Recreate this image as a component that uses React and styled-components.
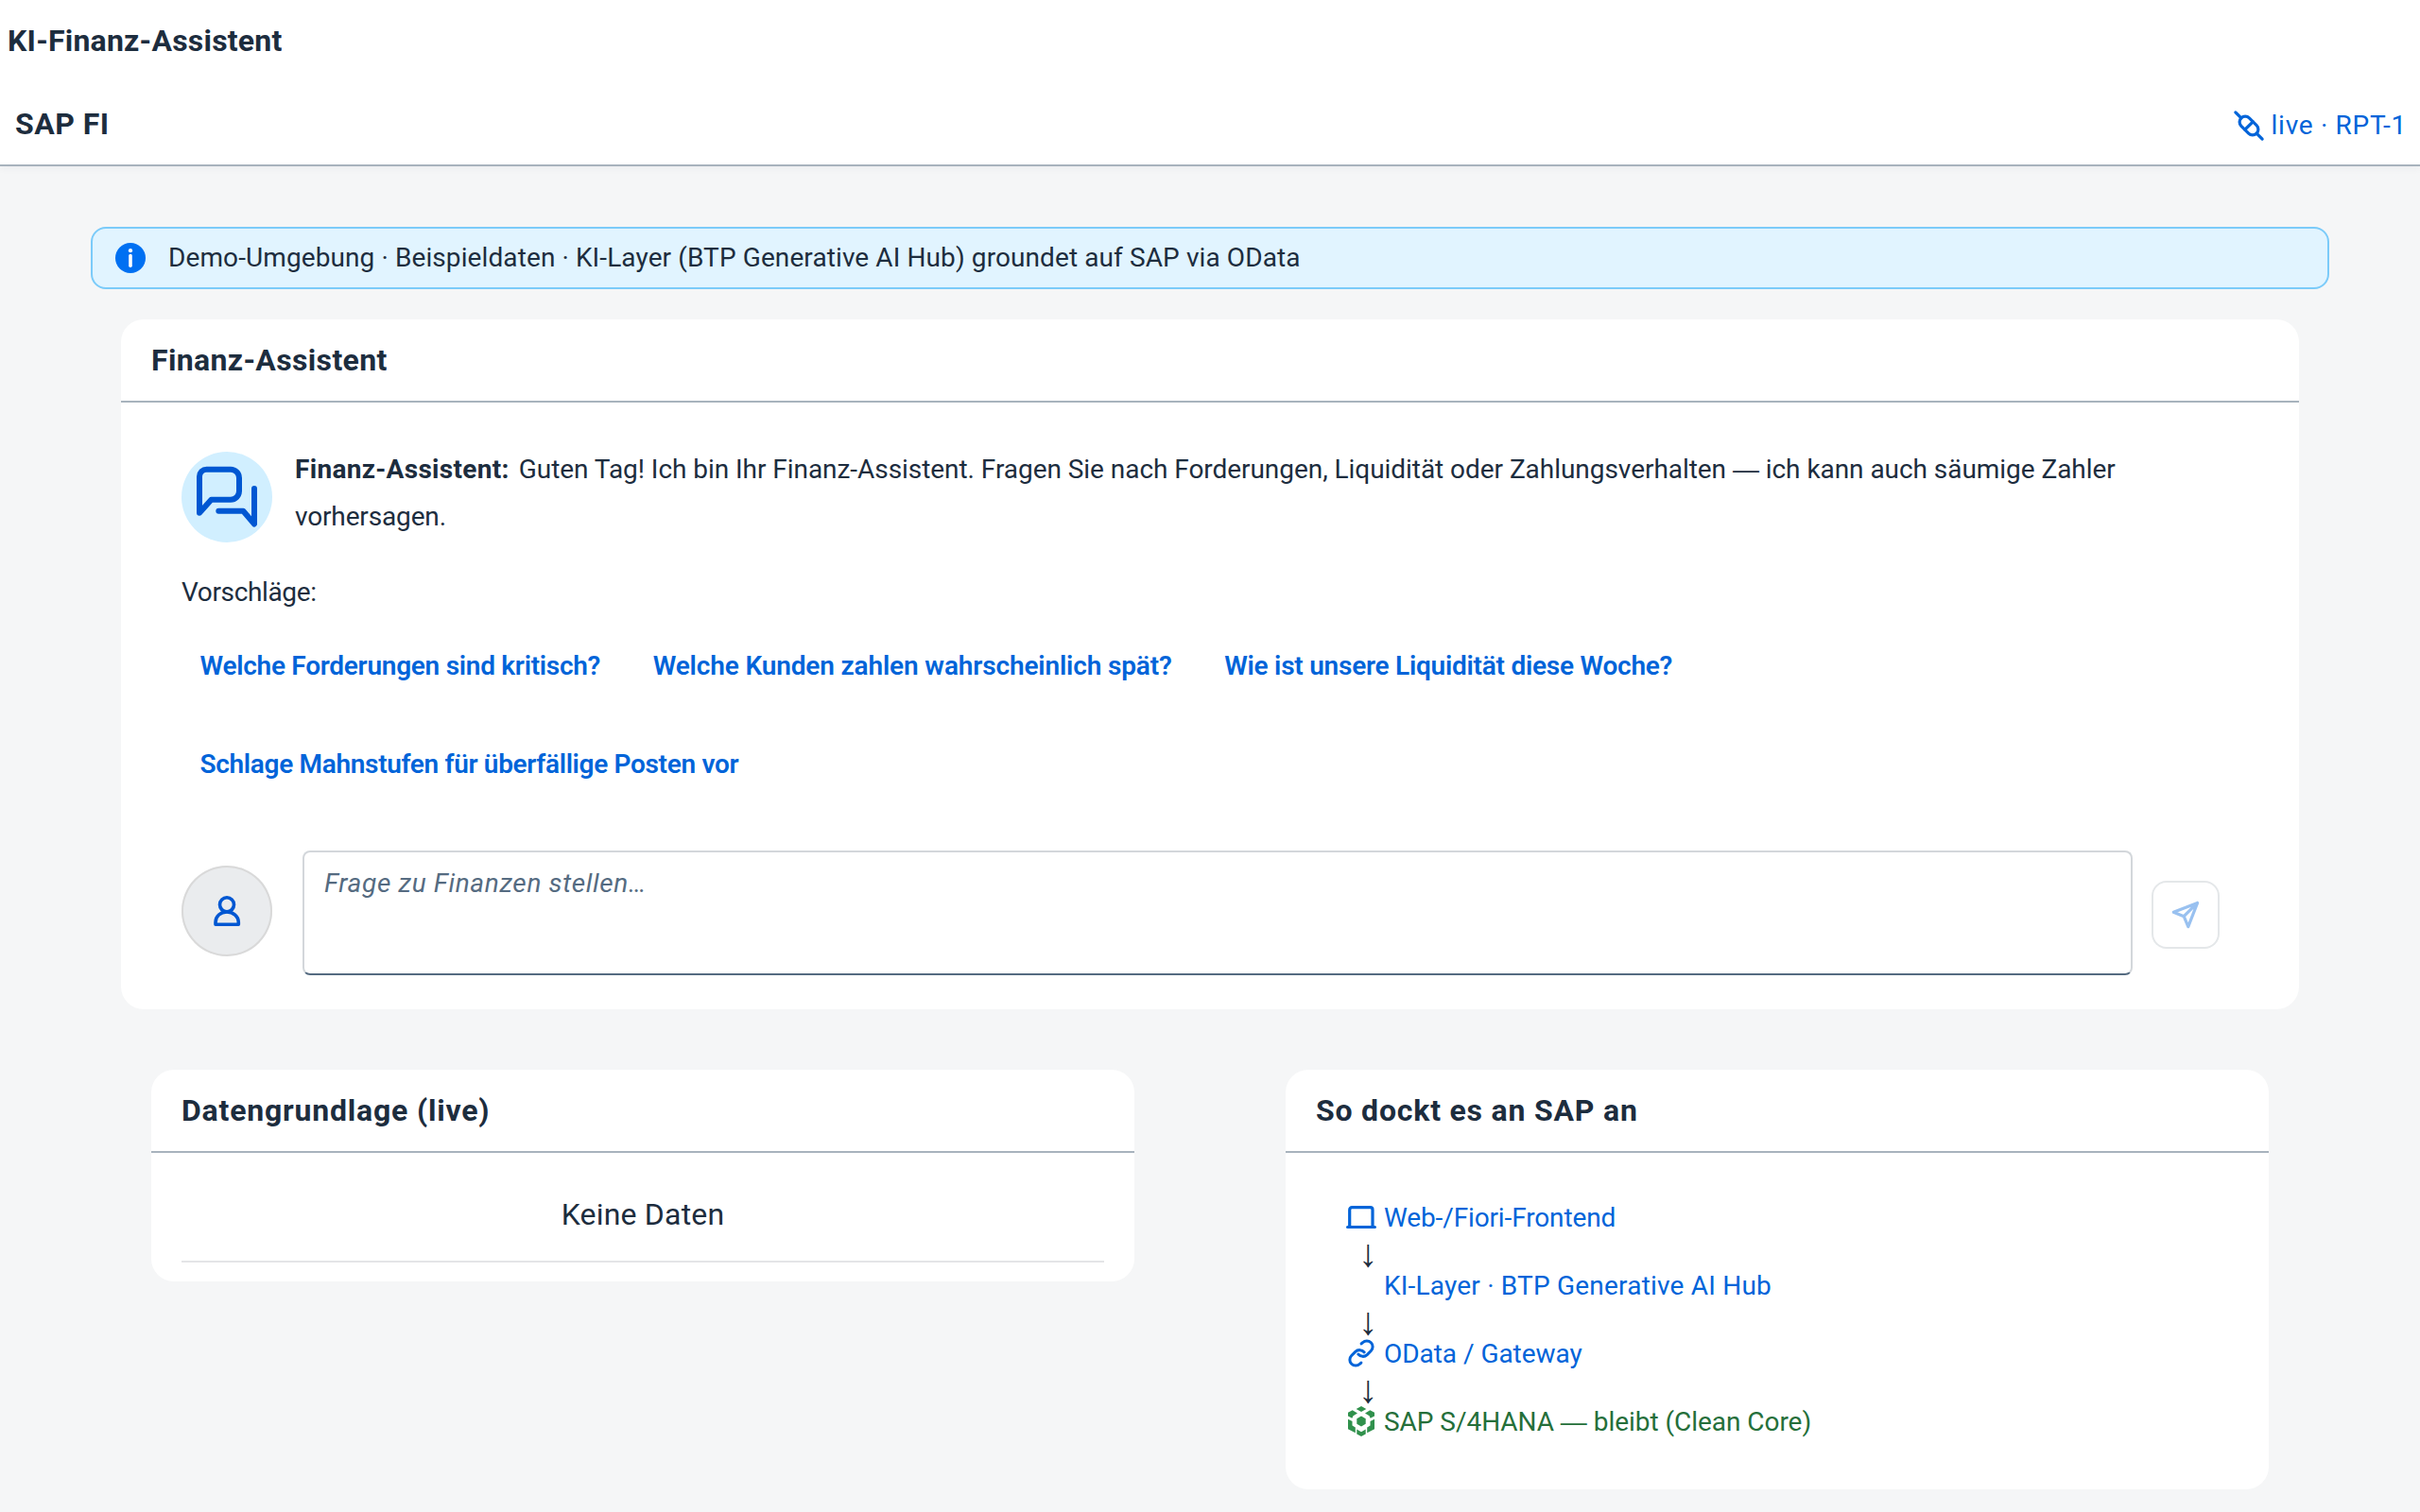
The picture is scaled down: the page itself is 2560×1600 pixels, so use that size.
import React from "react";
import styled, { createGlobalStyle } from "styled-components";

const suggestions = [
  { text: "Welche Forderungen sind kritisch?", spacing: -0.27 },
  { text: "Welche Kunden zahlen wahrscheinlich spät?", spacing: -0.14 },
  { text: "Wie ist unsere Liquidität diese Woche?", spacing: -0.24 },
  { text: "Schlage Mahnstufen für überfällige Posten vor", spacing: -0.32 },
];

const InfoIcon = () => (
  <Icon viewBox="0 0 32 32">
    <circle cx="16" cy="16" r="16" fill="#0070f2" />
    <circle cx="16" cy="8.2" r="2.1" fill="#fff" />
    <path d="M16 13.6v10.6" stroke="#fff" strokeWidth="3.6" strokeLinecap="round" />
  </Icon>
);

const ConnectedIcon = () => (
  <Icon viewBox="0 0 32 32">
    <g
      transform="rotate(45 16 16)"
      fill="none"
      stroke="currentColor"
      strokeWidth="3.2"
      strokeLinecap="round"
    >
      <rect x="4.5" y="10" width="23" height="12" rx="6" />
      <path d="M16 10v12M-4 16h8.5M27.5 16H36" />
    </g>
  </Icon>
);

const DiscussionIcon = () => (
  <AvatarIcon viewBox="0 0 96 96">
    <path d="M31.5 50.7H52a9 9 0 0 0 9-9v-14a9 9 0 0 0-9-9H26.5a7.5 7.5 0 0 0-7.5 7.5v38.5z" />
    <path d="M39.3 62.7h26L77 76.5V39" />
  </AvatarIcon>
);

const PersonIcon = () => (
  <AvatarIcon viewBox="0 0 96 96" $stroke={3.6}>
    <circle cx="48" cy="41.3" r="7.5" />
    <path d="M36 62.3V60c0-6.6 5.4-11 12-11s12.3 4.4 12.3 11v2.3z" />
  </AvatarIcon>
);

const SendIcon = () => (
  <AvatarIcon viewBox="0 0 72 72" $stroke={3.2} $color="#99c1f0">
    <path d="M48.6 23.4 23.3 33.3l10.9 4.4 4.6 11zM48.6 23.4 34.2 37.7" />
  </AvatarIcon>
);

const LaptopIcon = () => (
  <Icon viewBox="0 0 32 32" fill="none" stroke="currentColor" strokeWidth="3.2">
    <path d="M3.7 26V8.2a2.5 2.5 0 0 1 2.5-2.5h19.3A2.5 2.5 0 0 1 28 8.2V26" />
    <path d="M1.6 26.5h28.8" strokeLinecap="round" />
  </Icon>
);

const ChainIcon = () => (
  <Icon viewBox="0 0 32 32" fill="none" stroke="currentColor" strokeWidth="3" strokeLinecap="round">
    <path d="M12.8 17.1a6.5 6.5 0 0 0 9.4.5l4.1-4.1a6.2 6.2 0 0 0-8.8-8.8l-1.4 1.2" />
    <path d="M19.2 14.9a6.5 6.5 0 0 0-9.4-.5l-4.1 4.1a6.2 6.2 0 0 0 8.8 8.8l1.4-1.2" />
  </Icon>
);

const ClusterIcon = () => (
  <Icon viewBox="0 0 32 32" fill="#30914c">
    <path d="M10.7 3 16 0l5.3 3L16 6z" />
    <path d="M2 6.7l4.7-2.4L12 7.5l-4.5 2.7-1.2 2.6L2 10.4z" />
    <path d="M30 6.7l-4.7-2.4L20 7.5l4.5 2.7 1.2 2.6 4.3-2.4z" />
    <path d="M16 10.6l4.7 2.7v5.4L16 21.4l-4.7-2.7v-5.4z" />
    <path d="M2 13.7 6.5 16v4.5l3.3 2v5.7L2 24.2z" />
    <path d="M30 13.7 25.5 16v4.5l-3.3 2v5.7l7.8-4z" />
    <path d="M11.3 24.5 16 27.2l4.7-2.7v5L16 32l-4.7-2.5z" />
  </Icon>
);

const BlankIcon = () => <Icon viewBox="0 0 32 32" />;

const App = () => {
  return (
    <Page>
      <GlobalStyle />
      <Header>
        <PageTitle>KI-Finanz-Assistent</PageTitle>
        <HeaderRow>
          <Title $spacing={0.5}>SAP FI</Title>
          <LiveStatus>
            <ConnectedIcon />
            <StatusText $spacing={0.7}>live · RPT-1</StatusText>
          </LiveStatus>
        </HeaderRow>
      </Header>

      <MessageStrip>
        <InfoIcon />
        <StatusText $spacing={0.1}>
          Demo-Umgebung · Beispieldaten · KI-Layer (BTP Generative AI Hub) groundet auf SAP via OData
        </StatusText>
      </MessageStrip>

      <ChatPanel>
        <PanelHeader>
          <Title $spacing={0.35}>Finanz-Assistent</Title>
        </PanelHeader>
        <ChatBody>
          <Message>
            <BotAvatar>
              <DiscussionIcon />
            </BotAvatar>
            <MessageText>
              <Sender>Finanz-Assistent:</Sender>
              Guten Tag! Ich bin Ihr Finanz-Assistent. Fragen Sie nach Forderungen, Liquidität oder
              Zahlungsverhalten <Dash>—</Dash> ich kann auch säumige Zahler{" "}
              <LastWord>vorhersagen.</LastWord>
            </MessageText>
          </Message>
          <SuggestionLabel>Vorschläge:</SuggestionLabel>
          <Suggestions>
            {suggestions.map((s) => (
              <SuggestionButton key={s.text} $spacing={s.spacing}>
                {s.text}
              </SuggestionButton>
            ))}
          </Suggestions>
          <FeedInput>
            <UserAvatar>
              <PersonIcon />
            </UserAvatar>
            <Question placeholder="Frage zu Finanzen stellen…" />
            <SendButton>
              <SendIcon />
            </SendButton>
          </FeedInput>
        </ChatBody>
      </ChatPanel>

      <PanelGrid>
        <Panel>
          <PanelHeader>
            <Title $spacing={0.8}>Datengrundlage (live)</Title>
          </PanelHeader>
          <EmptyList>Keine Daten</EmptyList>
        </Panel>
        <Panel>
          <PanelHeader>
            <Title $spacing={0.8}>So dockt es an SAP an</Title>
          </PanelHeader>
          <LayerList>
            <Layer>
              <LaptopIcon />
              <LayerText $spacing={-0.13}>Web-/Fiori-Frontend</LayerText>
            </Layer>
            <Arrow>↓</Arrow>
            <Layer>
              <BlankIcon />
              <LayerText $spacing={0.2}>KI-Layer · BTP Generative AI Hub</LayerText>
            </Layer>
            <Arrow>↓</Arrow>
            <Layer>
              <ChainIcon />
              <LayerText $spacing={-0.04}>OData / Gateway</LayerText>
            </Layer>
            <Arrow>↓</Arrow>
            <Layer $positive>
              <ClusterIcon />
              <LayerText $spacing={-0.04}>
                SAP S/4HANA <Dash>—</Dash> bleibt (Clean Core)
              </LayerText>
            </Layer>
          </LayerList>
        </Panel>
      </PanelGrid>
    </Page>
  );
};

export default App;

const GlobalStyle = createGlobalStyle`
  * {
    box-sizing: border-box;
  }

  body {
    margin: 0;
    background: #f5f6f7;
    color: #1d2d3e;
    font-family: Roboto, "Liberation Sans", sans-serif;
    font-size: 28px;
  }
`;

const Page = styled.div`
  display: flex;
  flex-direction: column;
  height: 1600px;
`;

const Icon = styled.svg`
  flex: none;
  width: 32px;
  height: 32px;
  overflow: visible;
`;

const AvatarIcon = styled.svg`
  display: block;
  width: 100%;
  height: 100%;
  fill: none;
  stroke: ${(props) => props.$color || "#0057d2"};
  stroke-width: ${(props) => props.$stroke || 6};
  stroke-linecap: round;
  stroke-linejoin: round;
`;

const Header = styled.header`
  height: 176px;
  background: #fff;
  border-bottom: 2px solid #a8b3bd;
  box-shadow: 0 2px 8px rgba(34, 53, 72, 0.05);
`;

const PageTitle = styled.h1`
  margin: 0;
  padding-left: 8px;
  font-size: 32px;
  font-weight: 700;
  line-height: 86px;
  letter-spacing: 0.22px;
`;

const HeaderRow = styled.div`
  display: flex;
  justify-content: space-between;
  align-items: center;
  padding: 0 14px 0 16px;
  height: 90px;
`;

const Title = styled.h2`
  margin: 0;
  font-size: 32px;
  font-weight: 700;
  line-height: 40px;
  letter-spacing: ${(props) => props.$spacing}px;
`;

const LiveStatus = styled.div`
  display: flex;
  align-items: center;
  gap: 8px;
  padding-top: 4px;
  color: #0064d9;
`;

const StatusText = styled.span`
  line-height: 36px;
  white-space: nowrap;
  letter-spacing: ${(props) => props.$spacing}px;
`;

const Dash = styled.span`
  font-family: "Liberation Sans", sans-serif;
  line-height: 1;
`;

const MessageStrip = styled.div`
  display: flex;
  flex: none;
  align-items: center;
  gap: 24px;
  height: 66px;
  margin: 64px 96px 0;
  padding: 0 24px;
  border: 2px solid #7bcbf9;
  border-radius: 16px;
  background: #e1f4ff;
`;

const Panel = styled.section`
  border-radius: 24px;
  background: #fff;
`;

const ChatPanel = styled(Panel)`
  flex: none;
  margin: 32px 128px 0;
`;

const PanelHeader = styled.div`
  display: flex;
  align-items: center;
  height: 88px;
  padding: 0 32px;
  border-bottom: 2px solid #a8b3bd;
`;

const ChatBody = styled.div`
  padding: 46px 64px 36px;
`;

const Message = styled.div`
  display: flex;
  gap: 24px;
`;

const Avatar = styled.div`
  flex: none;
  width: 96px;
  height: 96px;
  border-radius: 50%;
`;

const BotAvatar = styled(Avatar)`
  margin-top: 6px;
  background: #d1efff;
`;

const UserAvatar = styled(Avatar)`
  margin: 16px 32px 0 0;
  background: #eaecee;
  box-shadow: inset 0 0 0 2px #d9d9d9;
`;

const MessageText = styled.p`
  margin: 0;
  line-height: 50px;
  letter-spacing: -0.05px;
`;

const Sender = styled.strong`
  margin-right: 10px;
  letter-spacing: 0.31px;
`;

const LastWord = styled.span`
  letter-spacing: -0.15px;
`;

const SuggestionLabel = styled.div`
  margin-top: 33px;
  line-height: 40px;
  letter-spacing: -0.36px;
`;

const Suggestions = styled.div`
  display: flex;
  flex-wrap: wrap;
  gap: 32px 16px;
  margin-top: 21px;
`;

const SuggestionButton = styled.button`
  height: 72px;
  padding: 0 20px 0 19.5px;
  border: none;
  background: transparent;
  color: #0064d9;
  font: 600 28px Roboto, sans-serif;
  letter-spacing: ${(props) => props.$spacing}px;
`;

const FeedInput = styled.div`
  display: flex;
  align-items: flex-start;
  margin-top: 56px;
  padding-right: 20px;
`;

const Question = styled.textarea`
  flex: 1;
  height: 132px;
  padding: 13px 21px;
  border: 2px solid #d3d7db;
  border-bottom-color: #556b81;
  border-radius: 8px;
  background: #fff;
  resize: none;
  font: 28px/40px Roboto, sans-serif;

  &::placeholder {
    color: #556b81;
    font-style: italic;
    letter-spacing: 0.65px;
  }
`;

const SendButton = styled.button`
  flex: none;
  width: 72px;
  height: 72px;
  margin: 32px 0 0 20px;
  padding: 0;
  border: none;
  border-radius: 16px;
  background: #fff;
  box-shadow: inset 0 0 0 2px #e4e7e9;
`;

const PanelGrid = styled.div`
  display: grid;
  grid-template-columns: 1fr 1fr;
  align-items: start;
  gap: 160px;
  margin: 64px 160px 0;
`;

const EmptyList = styled.div`
  margin: 16px 32px 20px;
  border-bottom: 2px solid #e4e5e7;
  font-size: 32px;
  line-height: 98px;
  letter-spacing: 0.2px;
  text-align: center;
`;

const LayerList = styled.div`
  padding: 50px 64px 54px;
`;

const Layer = styled.div`
  display: flex;
  align-items: center;
  gap: 8px;
  height: 36px;
  color: ${(props) => (props.$positive ? "#256f3a" : "#0064d9")};
`;

const LayerText = styled(StatusText)`
  padding-top: 2px;
`;

const Arrow = styled.div`
  height: 36px;
  padding-left: 13px;
  font-family: "Liberation Sans", sans-serif;
  font-size: 41px;
  line-height: 41px;
`;
